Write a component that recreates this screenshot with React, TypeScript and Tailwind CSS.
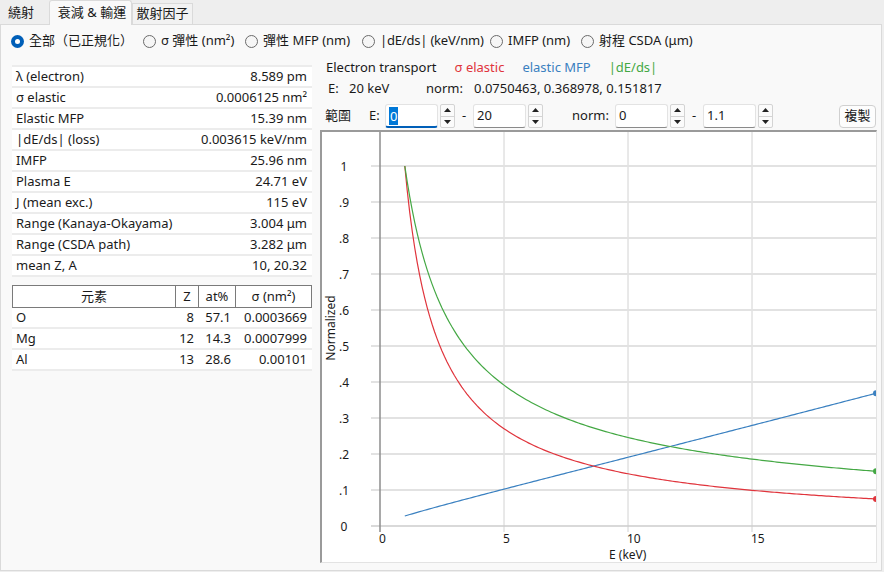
import React from "react";

const RED = "#e0343c";
const BLUE = "#3a80c0";
const GREEN = "#44a844";

function Radio({ checked, label, w }: { checked?: boolean; label: string; w: string }) {
  return (
    <div className={`flex items-center gap-[5px] ${w}`}>
      {checked ? (
        <span className="w-[13px] h-[13px] rounded-full bg-[#005fb8] flex items-center justify-center shrink-0">
          <span className="w-[5px] h-[5px] rounded-full bg-white" />
        </span>
      ) : (
        <span className="w-[13px] h-[13px] rounded-full border border-[#6b6b6b] bg-[#f6f6f6] shrink-0" />
      )}
      <span className="whitespace-nowrap">{label}</span>
    </div>
  );
}

function Spinner() {
  return (
    <div className="w-[15px] h-[24px] flex flex-col border border-[#d4d4d4] rounded-[2px] bg-[#fbfbfb]">
      <div className="flex-1 flex items-center justify-center border-b border-[#d4d4d4]">
        <svg width="7" height="4" viewBox="0 0 7 4">
          <polygon points="0,4 7,4 3.5,0" fill="#222" />
        </svg>
      </div>
      <div className="flex-1 flex items-center justify-center">
        <svg width="7" height="4" viewBox="0 0 7 4">
          <polygon points="0,0 7,0 3.5,4" fill="#222" />
        </svg>
      </div>
    </div>
  );
}

function NumBox({ value, focused }: { value: string; focused?: boolean }) {
  return (
    <div className="flex items-center gap-[2px]">
      <div
        className={
          focused
            ? "w-[53px] h-[24px] bg-white border border-[#e3e3e3] border-b-2 border-b-[#005fb8] rounded-[3px] flex items-center pl-[3px]"
            : "w-[53px] h-[24px] bg-white border border-[#e3e3e3] border-b-[#8a8a8a] rounded-[3px] flex items-center pl-[3px]"
        }
      >
        {focused ? (
          <span className="bg-[#0078d7] text-white leading-[18px] px-[1px]">{value}</span>
        ) : (
          <span>{value}</span>
        )}
      </div>
      <Spinner />
    </div>
  );
}

const props: [string, string][] = [
  ["λ (electron)", "8.589 pm"],
  ["σ elastic", "0.0006125 nm²"],
  ["Elastic MFP", "15.39 nm"],
  ["|dE/ds| (loss)", "0.003615 keV/nm"],
  ["IMFP", "25.96 nm"],
  ["Plasma E", "24.71 eV"],
  ["J (mean exc.)", "115 eV"],
  ["Range (Kanaya-Okayama)", "3.004 μm"],
  ["Range (CSDA path)", "3.282 μm"],
  ["mean Z, A", "10, 20.32"],
];

const elems: [string, string, string, string][] = [
  ["O", "8", "57.1", "0.0003669"],
  ["Mg", "12", "14.3", "0.0007999"],
  ["Al", "13", "28.6", "0.00101"],
];

function redV(E: number) {
  const b = 0.753 + 0.0371 * Math.log(E);
  return Math.pow(E, -b);
}
function greenV(E: number) {
  const lk = 1.468;
  const a = Math.pow(E, -0.629);
  const l = (Math.log(E) + lk) / (E * lk);
  return (a + l) / 2;
}
function blueV(E: number) {
  return (0.368978 * 0.0750463) / redV(E);
}

const X = (E: number) => 58 + 24.8 * E;
const Y = (v: number) => 394 - 360 * v;

function pathOf(f: (E: number) => number) {
  const pts: string[] = [];
  for (let i = 0; i <= 190; i++) {
    const E = 1 + i * 0.1;
    pts.push(`${i === 0 ? "M" : "L"}${X(E).toFixed(2)},${Y(f(E)).toFixed(2)}`);
  }
  return pts.join(" ");
}

function Chart() {
  const hLines = [1, 2, 3, 4, 5, 6, 7, 8, 9, 10];
  const yLabels = ["0", ".1", ".2", ".3", ".4", ".5", ".6", ".7", ".8", ".9", "1"];
  return (
    <div className="h-[433px] border-l-2 border-t-2 border-l-[#9a9a9a] border-t-[#9a9a9a] border-r border-b border-r-[#e3e3e3] border-b-[#e3e3e3] bg-white overflow-hidden">
      <svg width="554" height="430" viewBox="0 0 554 430" className="block">
        {[5, 10, 15].map((e) => (
          <line key={e} x1={X(e)} x2={X(e)} y1={0} y2={400} stroke="#d2d2d2" strokeWidth={1} />
        ))}
        {hLines.map((k) => (
          <line key={k} x1={49} x2={554} y1={Y(k / 10)} y2={Y(k / 10)} stroke="#e2e2e2" strokeWidth={2} />
        ))}
        <line x1={49} x2={554} y1={Y(0)} y2={Y(0)} stroke="#cdcdcd" strokeWidth={1.5} />
        <line x1={X(0)} x2={X(0)} y1={0} y2={400} stroke="#8c8c8c" strokeWidth={1.5} />
        {yLabels.map((t, i) => (
          <text key={t} x={22} y={Y(i / 10) + 5} fontSize={12} textAnchor="middle" fill="#1a1a1a" fontFamily="'Noto Sans', sans-serif">
            {t}
          </text>
        ))}
        {[0, 5, 10, 15].map((e) => (
          <text key={e} x={X(e) - 1} y={411} fontSize={12} fill="#1a1a1a" fontFamily="'Noto Sans', sans-serif">
            {e}
          </text>
        ))}
        <text x={287} y={426.5} fontSize={12} fill="#1a1a1a" fontFamily="'Noto Sans', sans-serif">
          E (keV)
        </text>
        <text
          x={0}
          y={0}
          fontSize={12}
          fill="#1a1a1a"
          textAnchor="middle"
          dominantBaseline="central"
          fontFamily="'Noto Sans', sans-serif"
          transform="translate(8,196) rotate(-90)"
        >
          Normalized
        </text>
        <path d={pathOf(blueV)} fill="none" stroke={BLUE} strokeWidth={1.2} />
        <path d={pathOf(redV)} fill="none" stroke={RED} strokeWidth={1.2} />
        <path d={pathOf(greenV)} fill="none" stroke={GREEN} strokeWidth={1.2} />
        <circle cx={X(20)} cy={Y(blueV(20))} r={3} fill={BLUE} />
        <circle cx={X(20)} cy={Y(redV(20))} r={3} fill={RED} />
        <circle cx={X(20)} cy={Y(greenV(20))} r={3} fill={GREEN} />
      </svg>
    </div>
  );
}

export default function App() {
  return (
    <div className="w-[884px] h-[572px] bg-[#eeeeee] text-[13px] text-[#1a1a1a] font-['Noto_Sans','Noto_Sans_CJK_TC',sans-serif] overflow-hidden">
      {/* tabs */}
      <div className="h-[24px] flex items-end relative z-10">
        <div className="w-[49px] h-[22px] flex items-center pl-[8px]">繞射</div>
        <div className="w-[83px] h-[25px] mb-[-1px] bg-[#f9f9f9] border border-b-0 border-[#dadada] rounded-t-[3px] flex items-center justify-center pl-[3px]">
          衰減 &amp; 輸運
        </div>
        <div className="w-[61px] h-[21px] bg-[#f2f2f2] border border-b-0 border-[#dadada] flex items-center justify-center">
          散射因子
        </div>
      </div>
      {/* panel */}
      <div className="w-[882px] h-[547px] bg-[#f9f9f9] border border-[#dadada] flex flex-col">
        <div className="h-[22px] mt-[5px] pl-[10px] flex items-center">
          <Radio checked label="全部（已正規化）" w="w-[132px]" />
          <Radio label="σ 彈性 (nm²)" w="w-[102px]" />
          <Radio label="彈性 MFP (nm)" w="w-[117px]" />
          <Radio label="|dE/ds| (keV/nm)" w="w-[128px] tracking-[-0.2px]" />
          <Radio label="IMFP (nm)" w="w-[91px]" />
          <Radio label="射程 CSDA (μm)" w="w-[120px]" />
        </div>
        <div className="flex mt-[7px] pl-[11px] gap-[8px]">
          {/* left */}
          <div className="w-[300px] pt-[6px]">
            <div className="border-t-2 border-[#ececec]">
              {props.map(([k, v]) => (
                <div key={k} className="h-[21px] bg-white border-b-2 border-[#ececec] flex items-center justify-between px-[4px] pr-[5px]">
                  <span>{k}</span>
                  <span>{v}</span>
                </div>
              ))}
            </div>
            <div className="mt-[8px]">
              <div className="h-[23px] flex bg-white border border-[#7a7a7a]">
                <div className="w-[163px] flex items-center justify-center border-r border-[#7a7a7a]">元素</div>
                <div className="w-[23px] flex items-center justify-center border-r border-[#7a7a7a]">Z</div>
                <div className="w-[37px] flex items-center justify-center border-r border-[#7a7a7a]">at%</div>
                <div className="flex-1 flex items-center justify-center">σ (nm²)</div>
              </div>
              {elems.map(([s, z, a, sg]) => (
                <div key={s} className="h-[21px] flex bg-white border-b-2 border-[#ececec]">
                  <div className="w-[163px] flex items-center pl-[4px]">{s}</div>
                  <div className="w-[23px] flex items-center justify-end pr-[4px]">{z}</div>
                  <div className="w-[37px] flex items-center justify-end pr-[4px]">{a}</div>
                  <div className="flex-1 flex items-center justify-end pr-[5px]">{sg}</div>
                </div>
              ))}
            </div>
          </div>
          {/* right */}
          <div className="w-[557px] flex flex-col">
            <div className="h-[18px] flex items-center gap-[18px] pl-[6px]">
              <span>Electron transport</span>
              <span style={{ color: RED }}>σ elastic</span>
              <span style={{ color: BLUE }}>elastic MFP</span>
              <span style={{ color: GREEN }}>|dE/ds|</span>
            </div>
            <div className="h-[18px] mt-[3px] flex items-center pl-[8px]">
              <span className="w-[21px]">E:</span>
              <span className="w-[77px]">20 keV</span>
              <span className="w-[48px]">norm:</span>
              <span>0.0750463, 0.368978, 0.151817</span>
            </div>
            <div className="h-[24px] mt-[6px] flex items-center pl-[5px]">
              <span className="w-[44px]">範圍</span>
              <span className="w-[16px]">E:</span>
              <NumBox value="0" focused />
              <span className="w-[18px] text-center">-</span>
              <NumBox value="20" />
              <span className="w-[29px]" />
              <span className="w-[43px]">norm:</span>
              <NumBox value="0" />
              <span className="w-[18px] text-center">-</span>
              <NumBox value="1.1" />
              <button className="ml-auto mr-[1px] w-[37px] h-[23px] border border-[#d0d0d0] rounded-[4px] bg-[#fdfdfd] flex items-center justify-center">
                複製
              </button>
            </div>
            <div className="mt-[2px]">
              <Chart />
            </div>
          </div>
        </div>
      </div>
    </div>
  );
}
